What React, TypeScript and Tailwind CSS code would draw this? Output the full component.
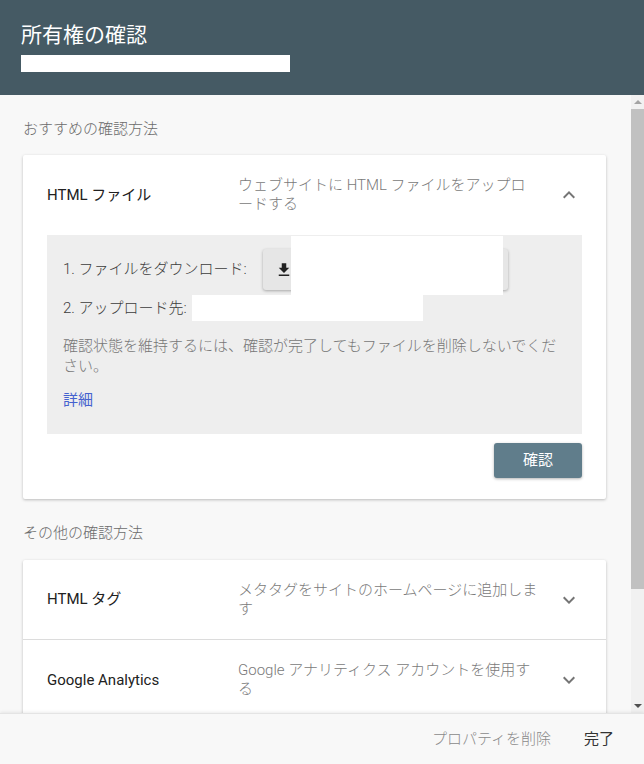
import React from 'react';

const font = { fontFamily: 'Roboto, "Noto Sans CJK JP", sans-serif' };

function Chevron({ up }: { up?: boolean }) {
  return (
    <svg width="24" height="24" viewBox="0 0 24 24" className="text-[#757575]">
      <path
        d={up ? 'M12 8l-6 6 1.41 1.41L12 10.83l4.59 4.58L18 14z' : 'M16.59 8.59L12 13.17 7.41 8.59 6 10l6 6 6-6z'}
        fill="currentColor"
      />
    </svg>
  );
}

function MethodRow({ title, desc, up, border }: { title: string; desc: string; up?: boolean; border?: boolean }) {
  return (
    <div className={`flex items-center h-[80px] pl-[24px] ${border ? 'border-b border-[#dcdcdc]' : ''}`}>
      <div className="w-[191px] text-[15px] text-[#212121]">{title}</div>
      <div className="w-[300px] text-[15px] leading-[19px] text-[#7a7a7a] font-light">{desc}</div>
      <div className="ml-[19px]">
        <Chevron up={up} />
      </div>
    </div>
  );
}

export default function App() {
  return (
    <div className="w-[644px] h-[764px] flex flex-col bg-[#f8f8f8] overflow-hidden" style={font}>
      {/* Header */}
      <div className="h-[95px] bg-[#455a64] pl-[21px] pt-[21px] shrink-0">
        <h1 className="text-[21px] leading-[28px] text-white font-normal">所有権の確認</h1>
        <div className="mt-[6px] w-[269px] h-[17px] bg-white" />
      </div>

      <div className="flex flex-1 min-h-0">
        {/* Scrollable content */}
        <div className="flex-1 overflow-hidden pl-[23px] pr-[25px]">
          <div className="pt-[24px] text-[15px] leading-[20px] text-[#6b6b6b] font-light">おすすめの確認方法</div>

          <div className="mt-[16px] bg-white rounded-[2px] shadow-[0_1px_3px_rgba(0,0,0,0.25)]">
            <MethodRow title="HTML ファイル" desc="ウェブサイトに HTML ファイルをアップロードする" up />
            <div className="px-[24px]">
              <div className="bg-[#eeeeee] h-[199px] pl-[16px] pr-[16px] pt-[14px] text-[15px] text-[#3c3c3c]">
                <div className="relative flex items-center h-[41px]">
                  <span className="font-light">1. ファイルをダウンロード:</span>
                  <div className="ml-[16px] w-[245px] h-[41px] bg-[#e6e6e6] rounded-[3px] shadow-[0_1px_3px_rgba(0,0,0,0.3)] flex items-center pl-[12px]">
                    <svg width="18" height="18" viewBox="0 0 24 24">
                      <path d="M19 9h-4V3H9v6H5l7 7 7-7zM5 18v2h14v-2H5z" fill="#212121" />
                    </svg>
                  </div>
                  <div className="absolute left-[228px] top-[-13px] w-[212px] h-[59px] bg-white" />
                </div>
                <div className="flex items-center h-[26px] mt-[5px]">
                  <span className="font-light">2. アップロード先:</span>
                  <div className="ml-[5px] w-[231px] h-[26px] bg-white" />
                </div>
                <p className="mt-[15px] leading-[20px] text-[#777777] font-light">
                  確認状態を維持するには、確認が完了してもファイルを削除しないでください。
                </p>
                <div className="mt-[13px] text-[#4562cf] text-[15px]">詳細</div>
              </div>
              <div className="flex justify-end pt-[9px] pb-[21px]">
                <button className="w-[88px] h-[35px] bg-[#607d8b] text-white text-[15px] rounded-[3px] shadow-[0_1px_3px_rgba(0,0,0,0.3)]">
                  確認
                </button>
              </div>
            </div>
          </div>

          <div className="pt-[24px] text-[15px] leading-[20px] text-[#6b6b6b] font-light">その他の確認方法</div>

          <div className="mt-[17px] bg-white rounded-[2px] shadow-[0_1px_3px_rgba(0,0,0,0.25)]">
            <MethodRow title="HTML タグ" desc="メタタグをサイトのホームページに追加します" border />
            <MethodRow title="Google Analytics" desc="Google アナリティクス アカウントを使用する" />
          </div>
        </div>

        {/* Scrollbar */}
        <div className="w-[13px] bg-[#f1f1f1] flex flex-col items-center shrink-0">
          <div className="h-[14px] flex items-center justify-center">
            <div className="w-0 h-0 border-l-[4px] border-r-[4px] border-b-[4px] border-l-transparent border-r-transparent border-b-[#a3a3a3]" />
          </div>
          <div className="w-full h-[480px] bg-[#c1c1c1]" />
          <div className="flex-1" />
          <div className="h-[14px] flex items-center justify-center">
            <div className="w-0 h-0 border-l-[4px] border-r-[4px] border-t-[4px] border-l-transparent border-r-transparent border-t-[#505050]" />
          </div>
        </div>
      </div>

      {/* Footer */}
      <div className="h-[51px] shrink-0 bg-[#f8f8f8] border-t border-[#e4e4e4] shadow-[0_-1px_3px_rgba(0,0,0,0.08)] flex items-center justify-end pr-[30px] text-[15px]">
        <span className="text-[#8a8a8a] font-light">プロパティを削除</span>
        <span className="ml-[33px] text-[#333333]">完了</span>
      </div>
    </div>
  );
}
